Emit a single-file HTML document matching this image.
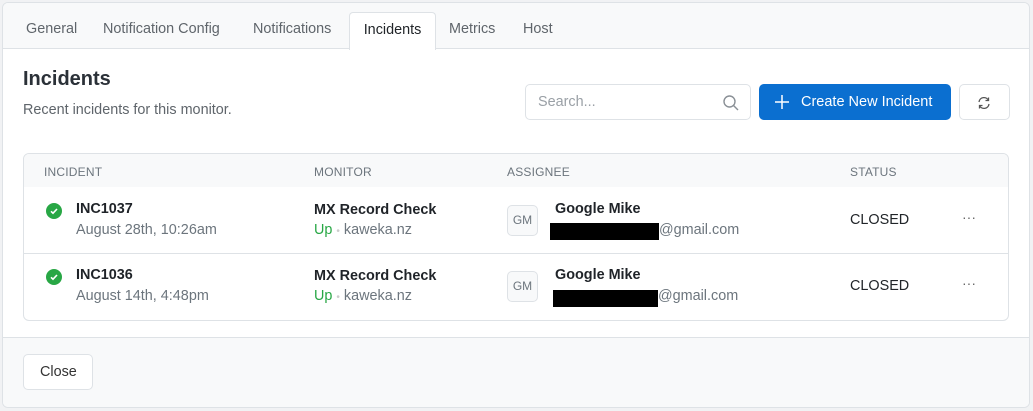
<!DOCTYPE html>
<html><head><meta charset="utf-8"><style>
*{box-sizing:border-box;margin:0;padding:0}
body{width:1033px;height:411px;background:#f1f2f4;font-family:"Liberation Sans",sans-serif;position:relative;overflow:hidden;color:#212529}
.card{position:absolute;left:2px;top:2px;width:1028px;height:406px;background:#fff;border:1px solid #dee2e6;border-radius:6px;overflow:hidden}
.tabs{position:absolute;left:0;top:0;width:100%;height:46px;background:#f8f9fa;border-bottom:1px solid #dee2e6}
.tab{position:absolute;top:18px;font-size:14.4px;color:#5f656b}
.tab.active{top:9px;height:38px;left:346px;width:87px;background:#fff;border:1px solid #dee2e6;border-bottom:none;border-radius:4px 4px 0 0;color:#212529;padding-top:9px;text-align:center}
.a{position:absolute}
.h{font-size:20px;font-weight:bold;color:#2b3138}
.btn{position:absolute;border:1px solid #dee2e6;border-radius:5px;background:#fff}
.th{position:absolute;top:11px;font-size:12px;color:#6c757d;letter-spacing:.2px}
.b{font-size:14.4px;font-weight:bold;color:#1f2328}
.s{font-size:14.4px;color:#6c757d}
.chk{position:absolute;width:16px;height:16px;border-radius:50%;background:#28a745}
.av{position:absolute;width:31px;height:31px;border:1px solid #dee2e6;border-radius:5px;background:#f8f9fa;font-size:12px;color:#6c757d;text-align:center;line-height:29px}
.blk{position:absolute;background:#000}
</style></head><body>
<div class="card">
<div class="tabs">
<span class="tab" style="left:23px">General</span>
<span class="tab" style="left:100px">Notification Config</span>
<span class="tab" style="left:250px">Notifications</span>
<div class="tab active">Incidents</div>
<span class="tab" style="left:446px">Metrics</span>
<span class="tab" style="left:520px">Host</span>
</div>
<div class="a h" style="left:20px;top:65px">Incidents</div>
<div class="a s" style="left:20px;top:99px;color:#5f656b">Recent incidents for this monitor.</div>
<div class="btn" style="left:522px;top:81px;width:226px;height:36px"><span class="a" style="left:12px;top:9px;font-size:14.4px;color:#9aa0a6">Search...</span>
<svg class="a" style="left:196px;top:9px" width="18" height="18" viewBox="0 0 18 18" fill="none" stroke="#8a9096" stroke-width="1.4"><circle cx="7.5" cy="7.5" r="5.5"/><path d="M11.5 11.5 16 16"/></svg></div>
<div class="a" style="left:756px;top:81px;width:192px;height:36px;background:#0b6fd0;border-radius:5px;color:#fff;font-size:14.5px">
<svg class="a" style="left:16px;top:11px" width="14" height="14" viewBox="0 0 14 14" stroke="#fff" stroke-width="1.5"><path d="M7 0v14M0 7h14"/></svg>
<span class="a" style="left:42px;top:10px">Create New Incident</span></div>
<div class="btn" style="left:956px;top:81px;width:51px;height:36px"><svg class="a" style="left:17px;top:11px" width="14" height="14" viewBox="0 0 14 14" fill="none" stroke="#555" stroke-width="1.3"><path d="M2 6A5 5 0 0 1 11.5 4.5M12 8A5 5 0 0 1 2.5 9.5"/><path d="M11.5 1.5v3h-3M2.5 12.5v-3h3"/></svg></div>
<div class="a" style="left:20px;top:150px;width:986px;height:168px;border:1px solid #dee2e6;border-radius:6px;overflow:hidden">
<div class="a" style="left:0;top:0;width:100%;height:33px;background:#f8f9fa"></div>
<span class="th" style="left:20px">INCIDENT</span><span class="th" style="left:290px">MONITOR</span><span class="th" style="left:483px">ASSIGNEE</span><span class="th" style="left:826px">STATUS</span>
<div class="a" style="left:0;top:99px;width:100%;height:1px;background:#dee2e6"></div>
</div>
<!-- row 1 -->
<div class="chk" style="left:43px;top:200px"></div><svg class="a" style="left:43px;top:200px" width="16" height="16"><path d="M5 8.3 7 10.2 11 6" stroke="#fff" stroke-width="1.6" fill="none"/></svg>
<div class="a b" style="left:73px;top:198px">INC1037</div>
<div class="a s" style="left:73px;top:219px">August 28th, 10:26am</div>
<div class="a b" style="left:311px;top:199px">MX Record Check</div>
<div class="a s" style="left:311px;top:219px"><span style="color:#28a745">Up</span> <span style="color:#ccc;font-size:10px">•</span> kaweka.nz</div>
<div class="av" style="left:504px;top:202px">GM</div>
<div class="a b" style="left:552px;top:198px">Google Mike</div>
<div class="blk" style="left:547px;top:220px;width:109px;height:17px"></div>
<div class="a s" style="left:656px;top:219px">@gmail.com</div>
<div class="a" style="left:847px;top:209px;font-size:14.4px;color:#212529">CLOSED</div>
<div class="a" style="left:959px;top:206px;font-size:14px;color:#666">···</div>
<!-- row 2 -->
<div class="chk" style="left:43px;top:266px"></div><svg class="a" style="left:43px;top:266px" width="16" height="16"><path d="M5 8.3 7 10.2 11 6" stroke="#fff" stroke-width="1.6" fill="none"/></svg>
<div class="a b" style="left:73px;top:264px">INC1036</div>
<div class="a s" style="left:73px;top:285px">August 14th, 4:48pm</div>
<div class="a b" style="left:311px;top:265px">MX Record Check</div>
<div class="a s" style="left:311px;top:285px"><span style="color:#28a745">Up</span> <span style="color:#ccc;font-size:10px">•</span> kaweka.nz</div>
<div class="av" style="left:504px;top:268px">GM</div>
<div class="a b" style="left:552px;top:264px">Google Mike</div>
<div class="blk" style="left:550px;top:287px;width:105px;height:17px"></div>
<div class="a s" style="left:655px;top:285px">@gmail.com</div>
<div class="a" style="left:847px;top:275px;font-size:14.4px;color:#212529">CLOSED</div>
<div class="a" style="left:959px;top:272px;font-size:14px;color:#666">···</div>
<!-- footer -->
<div class="a" style="left:0;top:334px;width:100%;height:72px;background:#f8f9fa;border-top:1px solid #dee2e6"></div>
<div class="btn" style="left:20px;top:351px;width:70px;height:36px"><span class="a" style="left:16px;top:9px;font-size:14.4px;color:#333">Close</span></div>
</div>
</body></html>
